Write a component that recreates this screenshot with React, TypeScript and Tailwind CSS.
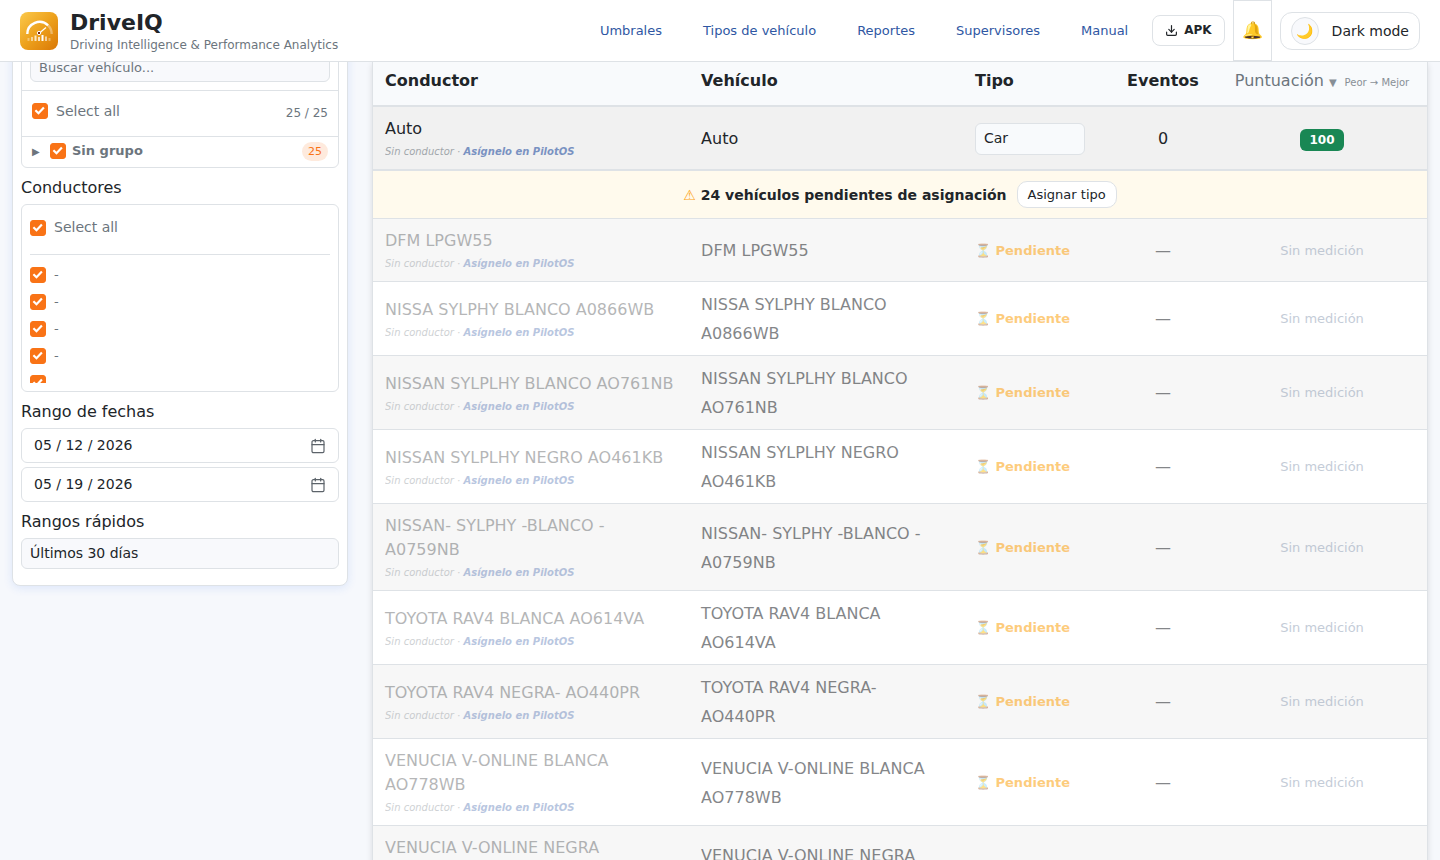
import { useState } from "react";
import type { ReactNode } from "react";
import { Calendar, Download } from "lucide-react";

type Vehicle = {
  id: number;
  name: string;
};

const navLinks = ["Umbrales", "Tipos de vehículo", "Reportes", "Supervisores", "Manual"];

const pendingVehicles: Vehicle[] = [
  { id: 1, name: "DFM LPGW55" },
  { id: 2, name: "NISSA SYLPHY BLANCO A0866WB" },
  { id: 3, name: "NISSAN SYLPLHY BLANCO AO761NB" },
  { id: 4, name: "NISSAN SYLPLHY NEGRO AO461KB" },
  { id: 5, name: "NISSAN- SYLPHY -BLANCO - A0759NB" },
  { id: 6, name: "TOYOTA RAV4 BLANCA AO614VA" },
  { id: 7, name: "TOYOTA RAV4 NEGRA- AO440PR" },
  { id: 8, name: "VENUCIA V-ONLINE BLANCA AO778WB" },
  { id: 9, name: "VENUCIA V-ONLINE NEGRA AO779WB" },
];

const drivers = [1, 2, 3, 4, 5];

function Logo() {
  return (
    <svg className="size-[38px] shrink-0" viewBox="0 0 38 38" aria-hidden="true">
      <defs>
        <linearGradient id="logoBg" x1="0" y1="0" x2="1" y2="1">
          <stop offset="0" stopColor="#fbc94b" />
          <stop offset="0.5" stopColor="#eda11c" />
          <stop offset="1" stopColor="#d97706" />
        </linearGradient>
      </defs>
      <rect width="38" height="38" rx="8" fill="url(#logoBg)" />
      <path d="M7.3 22A12.2 12.2 0 0 1 28.1 13.4" fill="none" stroke="#fff" strokeWidth="2.4" />
      <path d="M28.1 13.4A12.2 12.2 0 0 1 31.7 22" fill="none" stroke="#fff" strokeOpacity="0.35" strokeWidth="2.4" />
      <path d="M19.5 21l6.5-5.5" stroke="#fff" strokeWidth="1.2" />
      <circle cx="19" cy="21" r="1.7" fill="#7c2d12" stroke="#fff" strokeWidth="1" />
      <g fill="#fff">
        <rect x="7.5" y="26" width="2" height="3" opacity="0.35" />
        <rect x="11" y="25" width="2" height="4" opacity="0.55" />
        <rect x="14.5" y="23.5" width="2" height="5.5" opacity="0.75" />
        <rect x="18" y="25" width="2" height="4" opacity="0.75" />
        <rect x="21.5" y="23" width="2" height="6" />
        <rect x="25" y="24.5" width="2" height="4.5" opacity="0.6" />
        <rect x="28.5" y="26" width="2" height="3" opacity="0.35" />
      </g>
    </svg>
  );
}

function Check({ label, children }: { label?: string; children?: ReactNode }) {
  return (
    <label className="flex items-center gap-2">
      <span className="grid size-4 shrink-0">
        <input
          type="checkbox"
          defaultChecked
          aria-label={label}
          className="peer col-start-1 row-start-1 size-4 appearance-none rounded-[3px] border border-[#dee2e6] checked:border-[#f97316] checked:bg-[#f97316]"
        />
        <svg
          viewBox="0 0 16 16"
          className="pointer-events-none invisible col-start-1 row-start-1 size-4 peer-checked:visible"
          fill="none"
          stroke="#fff"
          strokeWidth="2.2"
        >
          <path d="M3.4 7.2l3.1 3 5.4-5.6" />
        </svg>
      </span>
      {children}
    </label>
  );
}

function DateField({ label, initial }: { label: string; initial: string }) {
  const [value, setValue] = useState(initial);
  return (
    <div className="flex h-[35px] items-center rounded-md border border-[#dee2e6] bg-white px-3">
      <input
        type="text"
        aria-label={label}
        value={value}
        onChange={(e) => setValue(e.target.value)}
        className="min-w-0 flex-1 pb-0.5 text-sm text-[#212529] outline-none"
      />
      <button type="button" aria-label="Abrir calendario" className="text-[#5c636a]">
        <Calendar size={16} strokeWidth={1.8} />
      </button>
    </div>
  );
}

function Sidebar() {
  return (
    <aside className="relative -mt-7 w-84 shrink-0 self-start rounded-lg border border-[#dee2e6] bg-white px-2 pt-2 pb-4 shadow-[0_2px_10px_rgba(37,99,235,0.12)]">
      <div className="rounded-md border border-[#dee2e6]">
        <div className="border-b border-[#dee2e6] p-2">
          <input
            type="text"
            aria-label="Buscar vehículo"
            placeholder="Buscar vehículo..."
            className="block h-[30px] w-full rounded-md border border-[#dee2e6] bg-[#f8f9fc] px-2 text-[13px] placeholder:text-[#6c757d]"
          />
        </div>
        <div className="flex h-[46px] items-center justify-between border-b border-[#dee2e6] px-[10px] pb-[6px]">
          <Check>
            <span className="text-sm">Select all</span>
          </Check>
          <span className="pt-1 text-xs">25 / 25</span>
        </div>
        <div className="flex h-[30px] items-center px-[10px] pb-0.5">
          <button type="button" aria-label="Expandir grupo" className="w-[18px] text-left text-[10px]">
            ▶
          </button>
          <Check>
            <span className="-ml-[2px] text-[13px] font-bold">Sin grupo</span>
          </Check>
          <span className="ml-auto rounded-full bg-[#feeadd] px-[6px] text-[11px] leading-[19px] text-[#f97316]">25</span>
        </div>
      </div>

      <h2 className="pt-2 pb-1 leading-6 text-[#212529]">Conductores</h2>
      <div className="rounded-md border border-[#dee2e6] p-2">
        <div className="h-[170px] overflow-hidden">
          <div className="border-b border-[#dee2e6] pb-[11px]">
            <div className="flex h-[30px] items-center">
              <Check>
                <span className="pb-0.5 text-sm">Select all</span>
              </Check>
            </div>
          </div>
          <div className="flex flex-col gap-px pt-[7px]">
            {drivers.map((id) => (
              <div key={id} className="flex h-[26px] shrink-0 items-center">
                <Check>
                  <span className="text-[13px]">-</span>
                </Check>
              </div>
            ))}
          </div>
        </div>
      </div>

      <h2 className="pt-2 pb-1 leading-6 text-[#212529]">Rango de fechas</h2>
      <div className="flex flex-col gap-1">
        <DateField label="Desde" initial="05 / 12 / 2026" />
        <DateField label="Hasta" initial="05 / 19 / 2026" />
      </div>

      <label htmlFor="quickRange" className="block pt-2 pb-1 leading-6 text-[#212529]">
        Rangos rápidos
      </label>
      <select
        id="quickRange"
        className="block h-[31px] w-full appearance-none rounded-md border border-[#dee2e6] bg-[#f8f9fc] px-2 pb-0.5 text-sm text-[#212529]"
      >
        <option>Últimos 30 días</option>
      </select>
    </aside>
  );
}

function NoDriver() {
  return (
    <div className="text-[10px] leading-[21px] text-[#6c757d] italic opacity-60">
      Sin conductor ·{" "}
      <a href="#pilotos" className="font-bold text-[#2b54a3]">
        Asígnelo en PilotOS
      </a>
    </div>
  );
}

function PendingRow({ vehicle }: { vehicle: Vehicle }) {
  return (
    <tr className="border-b border-[#dee2e6] odd:bg-[#f7f7f7] [&>td]:px-3 [&>td]:pt-2 [&>td]:pb-[7px]">
      <td>
        <div className="pt-0.5 opacity-55">
          <div className="leading-6 text-[#212529] opacity-60">{vehicle.name}</div>
          <NoDriver />
        </div>
      </td>
      <td className="leading-[29px]">
        <div className="opacity-55">{vehicle.name}</div>
      </td>
      <td className="text-[13px] font-bold text-[#fca311]">
        <div className="opacity-55">⏳ Pendiente</div>
      </td>
      <td className="text-center">
        <div className="opacity-55">—</div>
      </td>
      <td className="text-center text-[13px] text-[#94a3b8]">
        <div className="opacity-55">Sin medición</div>
      </td>
    </tr>
  );
}

export default function App() {
  const [dark, setDark] = useState(false);

  return (
    <div className="flex h-screen flex-col overflow-hidden bg-[#f6f8fc] font-['DejaVu_Sans',sans-serif] text-[#6c757d]">
      <header className="z-10 flex h-[62px] shrink-0 items-center justify-between border-b border-[#dee2e6] bg-white px-5">
        <div className="flex items-center gap-3">
          <Logo />
          <div>
            <h1 className="text-[22px] leading-7 font-bold text-[#212529]">DriveIQ</h1>
            <p className="text-xs leading-4">Driving Intelligence &amp; Performance Analytics</p>
          </div>
        </div>

        <div className="flex h-full items-center gap-2">
          <nav className="mr-4 flex gap-[41px] text-[13px] text-[#2f57a3]">
            {navLinks.map((link) => (
              <a key={link} href="#">
                {link}
              </a>
            ))}
          </nav>
          <button
            type="button"
            className="flex h-[31px] items-center gap-[6px] rounded-lg border border-[#dee2e6] px-3 pb-px text-xs font-bold text-[#212529]"
          >
            <Download size={13} strokeWidth={2.2} />
            APK
          </button>
          <button type="button" aria-label="Notificaciones" className="h-full border border-[#dee2e6] px-2 text-[17px]">
            🔔
          </button>
          <button
            type="button"
            aria-pressed={dark}
            onClick={() => setDark(!dark)}
            className="flex h-[38px] items-center gap-[13px] rounded-xl border border-[#dee2e6] px-[10px] text-sm text-[#212529]"
          >
            <span className="flex size-7 items-center justify-center rounded-full border border-[#dee2e6] bg-[#f8f9fc]">
              🌙
            </span>
            Dark mode
          </button>
        </div>
      </header>

      <main className="flex min-h-0 flex-1 gap-6 px-3">
        <Sidebar />

        <section className="min-w-0 flex-1 self-start border-x border-[#dee2e6] bg-white shadow-[0_2px_6px_rgba(0,0,0,0.12)]">
          <table className="w-full table-fixed border-collapse text-[#212529]">
            <colgroup>
              <col className="w-[30%]" />
              <col className="w-[26%]" />
              <col className="w-[146px]" />
              <col className="w-[108px]" />
              <col className="w-[210px]" />
            </colgroup>
            <thead>
              <tr className="border-b-2 border-[#dee2e6] bg-[#f8fafc] text-left [&>th]:px-3 [&>th]:pt-[7px] [&>th]:pb-3">
                <th>Conductor</th>
                <th>Vehículo</th>
                <th>Tipo</th>
                <th className="text-center">Eventos</th>
                <th className="text-center font-normal whitespace-nowrap text-[#6c757d]">
                  <button type="button">
                    Puntuación <span className="text-[10px] opacity-80">▼</span>
                    <span className="ml-2 text-[10px] opacity-80">Peor → Mejor</span>
                  </button>
                </th>
              </tr>
            </thead>
            <tbody>
              <tr className="border-b-2 border-[#dee2e6] bg-[#f1f1f1] [&>td]:px-3 [&>td]:pt-2 [&>td]:pb-[7px]">
                <td>
                  <div className="pt-0.5 leading-6">Auto</div>
                  <NoDriver />
                </td>
                <td className="leading-[29px]">Auto</td>
                <td>
                  <select
                    aria-label="Tipo de vehículo"
                    className="block h-8 w-[110px] appearance-none rounded-md border border-[#dee2e6] bg-[#f8fafc] px-2 pb-0.5 text-sm"
                  >
                    <option>Car</option>
                  </select>
                </td>
                <td className="text-center">0</td>
                <td className="text-center">
                  <span className="inline-block rounded-md bg-[#198754] px-[9px] text-xs leading-[22px] font-bold text-white">
                    100
                  </span>
                </td>
              </tr>
              <tr className="border-b border-[#dee2e6] bg-[#fffaed]">
                <td colSpan={5} className="px-3 py-[10px]">
                  <div className="flex items-center justify-center gap-[10px]">
                    <span className="text-sm font-bold">
                      <span className="font-normal text-[#fca311]">⚠</span> 24 vehículos pendientes de asignación
                    </span>
                    <button
                      type="button"
                      className="h-[27px] rounded-[10px] border border-[#dee2e6] bg-white px-[10px] text-[13px]"
                    >
                      Asignar tipo
                    </button>
                  </div>
                </td>
              </tr>
              {pendingVehicles.map((vehicle) => (
                <PendingRow key={vehicle.id} vehicle={vehicle} />
              ))}
            </tbody>
          </table>
        </section>
      </main>
    </div>
  );
}
